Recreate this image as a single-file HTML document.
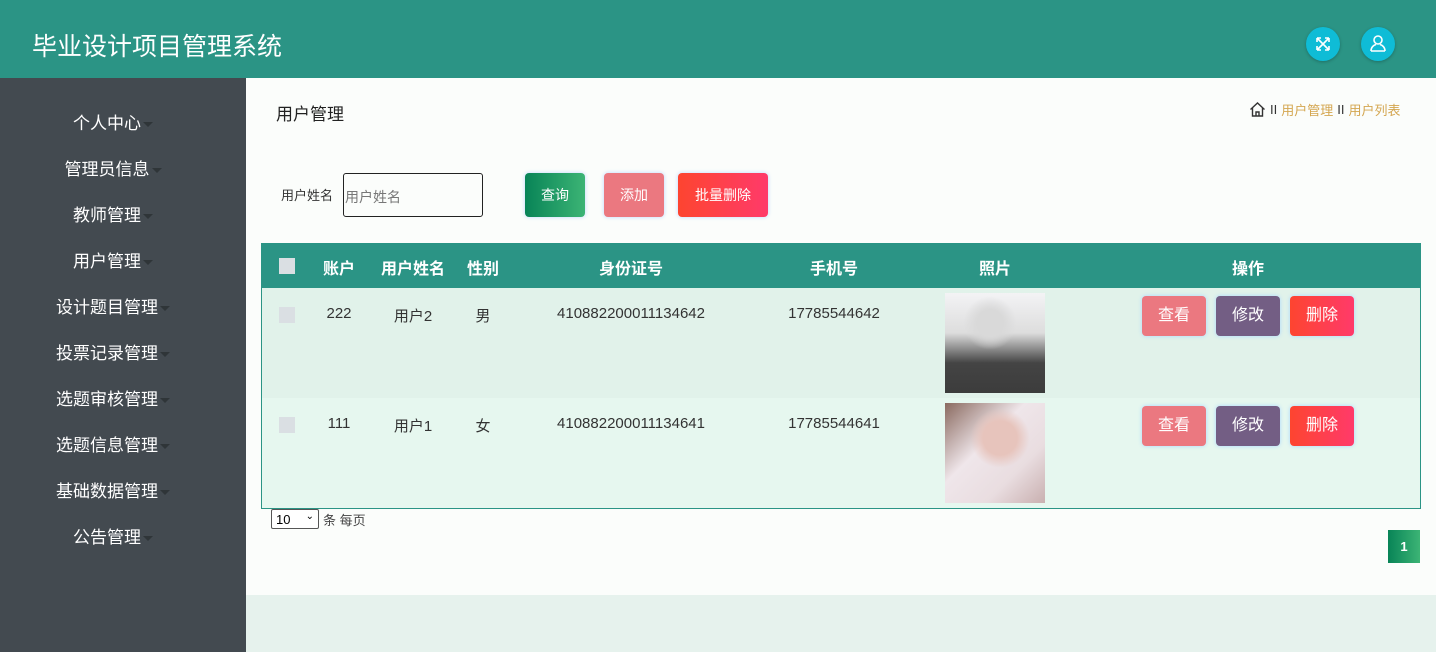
<!DOCTYPE html>
<html><head><meta charset="utf-8"><style>
*{margin:0;padding:0;box-sizing:border-box}
body{width:1436px;height:652px;overflow:hidden;font-family:"Liberation Sans","Noto Sans CJK SC",sans-serif;background:#e6f2ed;position:relative}
.abs{position:absolute}
.hdr{left:0;top:0;width:1436px;height:78px;background:#2b9485}
.title{left:32px;top:27px;color:#fff;font-size:25px}
.circ{width:34px;height:34px;border-radius:50%;background:#0fbcd6;top:27px;box-shadow:0 1px 3px rgba(0,0,0,.25)}
.side{left:0;top:78px;width:246px;height:574px;background:#434a50}
.mi{position:absolute;left:0;width:218px;text-align:center;color:#fff;font-size:17px}
.mi::after{content:"";display:inline-block;margin-left:2px;border:5px solid transparent;border-top:5px solid #2f3538;vertical-align:middle;transform:translateY(2px)}
.main{left:246px;top:78px;width:1190px;height:517px;background:#fbfdfb}
.btn{color:#fff;font-size:14px;text-align:center;border-radius:4px;box-shadow:0 0 4px #bcd6ff}
.th{color:#fff;font-size:16px;font-weight:bold;top:256px;transform:translateX(-50%)}
.td{color:#333;font-size:15px;transform:translateX(-50%)}
.cb{width:16px;height:16px;background:#dadfe3}
.ab{width:64px;height:40px;border-radius:4px;color:#fff;font-size:16px;line-height:40px;text-align:center;box-shadow:0 0 4px #a8d8ff}
</style></head><body>
<div class="abs hdr"></div>
<div class="abs title">毕业设计项目管理系统</div>
<div class="abs circ" style="left:1306px"><svg width="34" height="34" viewBox="0 0 34 34" fill="none" stroke="#fff" stroke-width="1.6"><path d="M11 11l12 12M23 11L11 23M11 11h4M11 11v4M23 11h-4M23 11v4M11 23h4M11 23v-4M23 23h-4M23 23v-4"/></svg></div>
<div class="abs circ" style="left:1361px"><svg width="34" height="34" viewBox="0 0 34 34" fill="none" stroke="#fff" stroke-width="1.6"><circle cx="17" cy="13" r="4"/><path d="M10 24c0-4 3-6 5-6.5M24 24c0-4-3-6-5-6.5M10 24h14"/></svg></div>
<div class="abs side">
<div class="mi" style="top:31px;left:4px">个人中心</div>
<div class="mi" style="top:77px;left:4px">管理员信息</div>
<div class="mi" style="top:123px;left:4px">教师管理</div>
<div class="mi" style="top:169px;left:4px">用户管理</div>
<div class="mi" style="top:215px;left:4px">设计题目管理</div>
<div class="mi" style="top:261px;left:4px">投票记录管理</div>
<div class="mi" style="top:307px;left:4px">选题审核管理</div>
<div class="mi" style="top:353px;left:4px">选题信息管理</div>
<div class="mi" style="top:399px;left:4px">基础数据管理</div>
<div class="mi" style="top:445px;left:4px">公告管理</div>
</div>
<div class="abs main"></div>
<div class="abs" style="left:276px;top:100px;font-size:17px;color:#222">用户管理</div>
<div class="abs" style="left:1249px;top:100px;font-size:13px;color:#333;display:flex;align-items:center;gap:4px">
<svg width="17" height="17" viewBox="0 0 17 17" fill="none" stroke="#333" stroke-width="1.4"><path d="M1.5 8.5L8.5 2l7 6.5M3.5 7v8h10V7M7 15v-4h3v4"/></svg>
<span>II</span><span style="color:#d4a650">用户管理</span><span>II</span><span style="color:#d4a650">用户列表</span></div>
<div class="abs" style="left:281px;top:185px;font-size:13px;color:#333">用户姓名</div>
<div class="abs" style="left:343px;top:173px;width:140px;height:44px;border:1px solid #222;border-radius:3px;font-size:14px;color:#777;padding:13px 0 0 1px">用户姓名</div>
<div class="abs btn" style="left:525px;top:173px;width:60px;height:44px;line-height:44px;background:linear-gradient(90deg,#088457,#3cb475)">查询</div>
<div class="abs btn" style="left:604px;top:173px;width:60px;height:44px;line-height:44px;background:#eb7880">添加</div>
<div class="abs btn" style="left:678px;top:173px;width:90px;height:44px;line-height:44px;background:linear-gradient(90deg,#fd4530,#ff3a6a)">批量删除</div>
<div class="abs" style="left:261px;top:243px;width:1160px;height:266px;border:1px solid #2b9485;background:#e6f7ef"></div>
<div class="abs" style="left:261px;top:243px;width:1160px;height:45px;background:#2b9485"></div>
<div class="abs" style="left:262px;top:288px;width:1158px;height:110px;background:#e1f2ea"></div>
<div class="abs cb" style="left:279px;top:258px"></div>
<div class="abs th" style="left:339px;top:255px">账户</div>
<div class="abs th" style="left:413px;top:255px">用户姓名</div>
<div class="abs th" style="left:483px;top:255px">性别</div>
<div class="abs th" style="left:631px;top:255px">身份证号</div>
<div class="abs th" style="left:834px;top:255px">手机号</div>
<div class="abs th" style="left:995px;top:255px">照片</div>
<div class="abs th" style="left:1248px;top:255px">操作</div>

<div class="abs cb" style="left:279px;top:307px"></div>
<div class="abs td" style="left:339px;top:305px">222</div>
<div class="abs td" style="left:413px;top:305px">用户2</div>
<div class="abs td" style="left:483px;top:305px">男</div>
<div class="abs td" style="left:631px;top:305px">410882200011134642</div>
<div class="abs td" style="left:834px;top:305px">17785544642</div>
<div class="abs" style="left:945px;top:293px;width:100px;height:100px;background:radial-gradient(circle at 45% 30%,#d9d9d9 0 15%,transparent 30%),linear-gradient(180deg,#f3f3f5 0%,#ddd 40%,#444 70%,#3c3c3c 100%)"></div>
<div class="abs ab" style="left:1142px;top:296px;background:#eb7880">查看</div>
<div class="abs ab" style="left:1216px;top:296px;background:#735e84">修改</div>
<div class="abs ab" style="left:1290px;top:296px;background:linear-gradient(90deg,#fd4530,#ff3a6a)">删除</div>

<div class="abs cb" style="left:279px;top:417px"></div>
<div class="abs td" style="left:339px;top:415px">111</div>
<div class="abs td" style="left:413px;top:415px">用户1</div>
<div class="abs td" style="left:483px;top:415px">女</div>
<div class="abs td" style="left:631px;top:415px">410882200011134641</div>
<div class="abs td" style="left:834px;top:415px">17785544641</div>
<div class="abs" style="left:945px;top:403px;width:100px;height:100px;background:radial-gradient(circle at 55% 35%,#e7c4bc 0 20%,transparent 35%),linear-gradient(135deg,#8a6a60 0%,#efe6ea 40%,#e9dde0 70%,#c9b0b0 100%)"></div>
<div class="abs ab" style="left:1142px;top:406px;background:#eb7880">查看</div>
<div class="abs ab" style="left:1216px;top:406px;background:#735e84">修改</div>
<div class="abs ab" style="left:1290px;top:406px;background:linear-gradient(90deg,#fd4530,#ff3a6a)">删除</div>

<div class="abs" style="left:271px;top:509px;width:48px;height:20px;border:1px solid #555;border-radius:2px;background:#fff;font-size:13px;padding:2px 0 0 4px">10<span style="position:absolute;right:4px;top:1px;font-size:10px">&#8964;</span></div>
<div class="abs" style="left:323px;top:510px;font-size:13px;color:#444">条 每页</div>
<div class="abs" style="left:1388px;top:530px;width:32px;height:33px;background:linear-gradient(90deg,#088457,#3cb475);color:#fff;font-size:13px;font-weight:bold;text-align:center;line-height:33px">1</div>
</body></html>
